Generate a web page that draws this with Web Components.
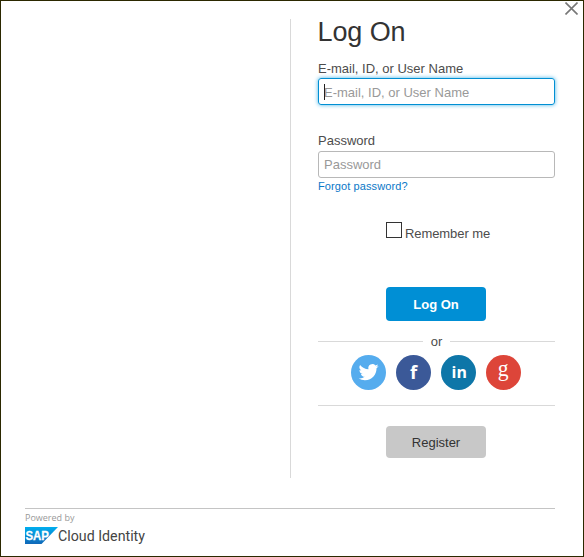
<!DOCTYPE html>
<html lang="en">
<head>
<meta charset="utf-8">
<title>Log On</title>
<style>
html,body{margin:0;height:100%;background:#fff}
body{font-family:"Liberation Sans",Arial,sans-serif;font-size:13px;color:#4c4c4c}
</style>
</head>
<body>
<logon-dialog></logon-dialog>
<script>
const define = (name, html, setup) => customElements.define(name, class extends HTMLElement {
  connectedCallback() {
    if (this.shadowRoot) return;
    const root = this.attachShadow({mode: 'open'});
    const t = document.createElement('template');
    t.innerHTML = html;
    root.append(t.content.cloneNode(true));
    if (setup) setup(this, root);
  }
});

define('text-field', `
<style>
:host{display:block}
label{display:block;height:18px;line-height:18px}
:host([type=password]) label{height:19px}
.box{position:relative;box-sizing:border-box;height:27px;border:1px solid #b8b8b8;border-radius:3px;padding:0 5px;display:flex}
input{flex:1;min-width:0;border:0;outline:0;padding:1px 0 0;margin:0;background:none;font:inherit;color:#333}
:host([type=password]) input{padding:0 0 1px}
input::placeholder{color:#999;opacity:1}
:host([active]) .box{border-color:#008fd3;box-shadow:0 0 4px #46b4e8}
.caret{display:none;position:absolute;left:5px;top:5px;width:1px;height:16px;background:#222}
:host([active]) .caret{display:block}
</style>
<label><slot></slot></label><div class="box"><input><span class="caret"></span></div>`,
(el, root) => {
  const input = root.querySelector('input');
  input.placeholder = el.getAttribute('placeholder');
  input.type = el.getAttribute('type') || 'text';
});

define('check-box', `
<style>
:host{display:flex;align-items:flex-start;gap:3px;height:20px}
i{box-sizing:border-box;width:16px;height:16px;border:1px solid #333}
span{line-height:15px;padding-top:4px;letter-spacing:-.08px}
</style><i></i><span><slot></slot></span>`);

define('push-button', `
<style>
:host{display:flex;align-items:center;justify-content:center;width:100px;height:32px;border-radius:4px;background:#c8c8c8;color:#333}
:host([primary]){height:34px;background:#008fd5;color:#fff;font-weight:bold}
</style><slot></slot>`);

define('rule-label', `
<style>
:host{display:flex;align-items:flex-start;gap:8px;height:16px;line-height:16px}
:host::before,:host::after{content:"";flex:1;height:1px;margin-top:7px;background:#d9d9d9}
</style><slot></slot>`);

const glyphs = {
  twitter: ['#55acee', '<path fill="#fff" transform="translate(8 7) scale(.83)" d="M23.6 4.9a9.7 9.7 0 0 1-2.8.8 4.9 4.9 0 0 0 2.1-2.7c-1 .6-2 1-3.1 1.2a4.9 4.9 0 0 0-8.4 4.5A13.9 13.9 0 0 1 1.3 3.6a4.9 4.9 0 0 0 1.5 6.5 4.9 4.9 0 0 1-2.2-.6v.1a4.9 4.9 0 0 0 3.9 4.8 4.9 4.9 0 0 1-2.2.1 4.9 4.9 0 0 0 4.6 3.4A9.9 9.9 0 0 1-.4 19.9a14 14 0 0 0 7.5 2.2c9.1 0 14-7.5 14-14v-.6a10 10 0 0 0 2.5-2.6z"/>'],
  facebook: ['#3b5998', '<text x="17.7" y="24" text-anchor="middle" font-size="18.5" font-weight="bold" font-family="Open Sans,sans-serif">f</text>'],
  linkedin: ['#0e76a8', '<text x="18.2" y="23.3" text-anchor="middle" font-size="16.5" font-weight="bold" font-family="Open Sans,sans-serif" textLength="15.3" lengthAdjust="spacingAndGlyphs">in</text>'],
  google: ['#dd4539', '<text x="17.1" y="21" text-anchor="middle" font-size="24" font-family="Liberation Serif,serif" textLength="10.8" lengthAdjust="spacingAndGlyphs">g</text>']
};
define('social-icon', `
<style>
:host{display:block;width:35px;height:35px}
svg{display:block}
text{fill:#fff}
</style><svg width="35" height="35" viewBox="0 0 35 35"><circle cx="17.5" cy="17.5" r="17.5"/><g></g></svg>`,
(el, root) => {
  const [color, shape] = glyphs[el.getAttribute('kind')];
  root.querySelector('circle').setAttribute('fill', color);
  root.querySelector('g').innerHTML = shape;
});

define('logon-form', `
<style>
:host{display:flex;flex-direction:column;width:237px}
h1{margin:0 0 12px -.5px;height:31px;line-height:31px;font-size:27px;letter-spacing:-.1px;font-weight:normal;color:#333}
.pw{margin-top:27px}
a{color:#0a78c8;font-size:11px;line-height:13px;margin-top:2px;letter-spacing:.1px}
check-box{margin:29px 0 0 68px}
push-button{margin-left:68px}
.primary{margin:45px 0 13px 68px}
.icons{display:flex;gap:10px;margin:5px 0 15px 33px}
.line{height:1px;background:#d9d9d9;margin-bottom:20px}
</style>
<h1>Log On</h1>
<text-field active placeholder="E-mail, ID, or User Name">E-mail, ID, or User Name</text-field>
<text-field class="pw" type="password" placeholder="Password">Password</text-field>
<a>Forgot password?</a>
<check-box>Remember me</check-box>
<push-button class="primary" primary>Log On</push-button>
<rule-label>or</rule-label>
<div class="icons"><social-icon kind="twitter"></social-icon><social-icon kind="facebook"></social-icon><social-icon kind="linkedin"></social-icon><social-icon kind="google"></social-icon></div>
<div class="line"></div>
<push-button>Register</push-button>`);

define('brand-footer', `
<style>
:host{display:block;border-top:1px solid #c4c4c4}
p{margin:3px 0 3px;height:12px;font:9px/12px "Open Sans",sans-serif;color:#999}
svg{display:block}
</style>
<p>Powered by</p>
<svg width="130" height="20" viewBox="0 0 130 20">
<defs><linearGradient id="b" x2="0" y2="1"><stop stop-color="#00aeef"/><stop offset="1" stop-color="#1068b8"/></linearGradient></defs>
<path d="M0 0H33L16.5 17H0z" fill="url(#b)"/>
<text x="0.5" y="13" font-family="Liberation Sans" font-weight="bold" font-size="13" fill="#fff" stroke="#fff" stroke-width=".3" textLength="23.5" lengthAdjust="spacingAndGlyphs">SAP</text>
<text x="33" y="14" font-family="Roboto" font-size="14" fill="#444" textLength="87" lengthAdjust="spacingAndGlyphs">Cloud Identity</text>
</svg>`);

define('logon-dialog', `
<style>
:host{position:relative;box-sizing:border-box;display:flex;flex-direction:column;width:584px;height:557px;border:1px solid #2b2800;background:#fff;padding:18px 28px 0 24px}
main{display:flex;justify-content:flex-end;height:459px;margin-bottom:30px}
.divider{width:1px;background:#d9d9d9;margin-right:27px}
logon-form{margin-top:-2px}
.close{position:absolute;right:5px;top:1px}
</style>
<svg class="close" width="13" height="13" viewBox="0 0 13 13"><path d="M.5.5l12 12M12.5.5l-12 12" stroke="#777" stroke-width="1.6"/></svg>
<main><div class="divider"></div><logon-form></logon-form></main>
<brand-footer></brand-footer>`);
</script>
</body>
</html>
